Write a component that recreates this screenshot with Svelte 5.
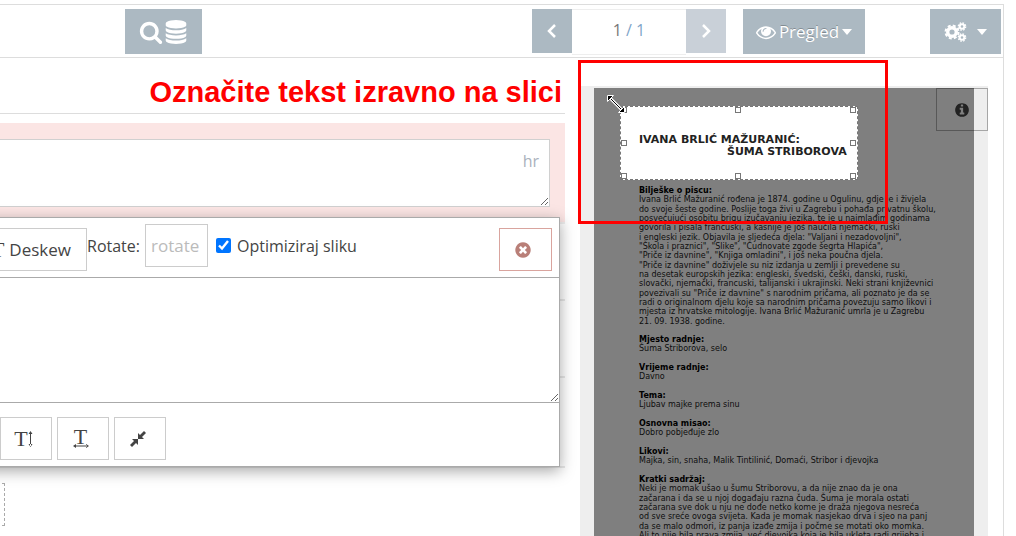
<script>
	let page = 1;
	let pages = 1;
	let note = "";
	let ocrText = "";
	let rotation = "";
	let optimize = true;

	let handles = ["nw", "n", "ne", "w", "e", "sw", "s", "se"];

	let sections = [
		{
			title: "Bilješke o piscu:",
			lines: [
				"Ivana Brlić Mažuranić rođena je 1874. godine u Ogulinu, gdje je i živjela",
				"do svoje šeste godine. Poslije toga živi u Zagrebu i pohađa privatnu školu,",
				"posvećujući osobitu brigu izučavanju jezika, te je u najmlađim godinama",
				"govorila i pisala francuski, a kasnije je još naučila njemački, ruski",
				"i engleski jezik. Objavila je sljedeća djela: \"Valjani i nezadovoljni\",",
				"\"Škola i praznici\", \"Slike\", \"Čudnovate zgode šegrta Hlapića\",",
				"\"Priče iz davnine\", \"Knjiga omladini\", i još neka poučna djela.",
				"\"Priče iz davnine\" doživjele su niz izdanja u zemlji i prevedene su",
				"na desetak europskih jezika: engleski, švedski, češki, danski, ruski,",
				"slovački, njemački, francuski, talijanski i ukrajinski. Neki strani književnici",
				"povezivali su \"Priče iz davnine\" s narodnim pričama, ali poznato je da se",
				"radi o originalnom djelu koje sa narodnim pričama povezuju samo likovi i",
				"mjesta iz hrvatske mitologije. Ivana Brlić Mažuranić umrla je u Zagrebu",
				"21. 09. 1938. godine.",
			],
		},
		{ title: "Mjesto radnje:", lines: ["Šuma Striborova, selo"] },
		{ title: "Vrijeme radnje:", lines: ["Davno"] },
		{ title: "Tema:", lines: ["Ljubav majke prema sinu"] },
		{ title: "Osnovna misao:", lines: ["Dobro pobjeđuje zlo"] },
		{
			title: "Likovi:",
			lines: ["Majka, sin, snaha, Malik Tintilinić, Domaći, Stribor i djevojka"],
		},
		{
			title: "Kratki sadržaj:",
			lines: [
				"Neki je momak ušao u šumu Striborovu, a da nije znao da je ona",
				"začarana i da se u njoj događaju razna čuda. Šuma je morala ostati",
				"začarana sve dok u nju ne dođe netko kome je draža njegova nesreća",
				"od sve sreće ovoga svijeta. Kada je momak nasjekao drva i sjeo na panj",
				"da se malo odmori, iz panja izađe zmija i počme se motati oko momka.",
				"Ali to nije bila prava zmija, već djevojka koja je bila ukleta radi grijeha i",
			],
		},
	];
</script>

<svelte:head>
	<title>Pregled</title>
</svelte:head>

<div class="frame">
	<header class="toolbar">
		<button class="tool search" aria-label="Traži">
			<svg width="24" height="24" viewBox="0 0 1792 1792">
				<path d="M1216 832q0-185-131.500-316.500t-316.500-131.500-316.500 131.500-131.500 316.500 131.500 316.500 316.500 131.500 316.500-131.500 131.500-316.500zm512 832q0 52-38 90t-90 38q-54 0-90-38l-343-342q-179 124-399 124-143 0-273.500-55.500t-225-150-150-225-55.500-273.500 55.500-273.500 150-225 225-150 273.500-55.500 273.500 55.500 225 150 150 225 55.500 273.500q0 220-124 399l343 343q37 37 37 90z" />
			</svg>
			<svg width="24" height="24" viewBox="0 0 1792 1792">
				<path d="M896 768q237 0 443-43t325-127v170q0 69-103 128t-280 93.500-385 34.500-385-34.500-280-93.500-103-128v-170q119 84 325 127t443 43zm0 768q237 0 443-43t325-127v170q0 69-103 128t-280 93.500-385 34.500-385-34.500-280-93.500-103-128v-170q119 84 325 127t443 43zm0-384q237 0 443-43t325-127v170q0 69-103 128t-280 93.500-385 34.500-385-34.500-280-93.500-103-128v-170q119 84 325 127t443 43zm0-1152q208 0 385 34.500t280 93.500 103 128v128q0 69-103 128t-280 93.500-385 34.500-385-34.500-280-93.500-103-128v-128q0-69 103-128t280-93.500 385-34.500z" />
			</svg>
		</button>

		<nav class="pager">
			<button class="tool step" aria-label="Prethodna">
				<svg width="12" height="16" viewBox="0 0 12 16">
					<path class="chevron" d="M9 2 L3 8 L9 14" />
				</svg>
			</button>
			<span class="count">{page} <i>/</i> <b>{pages}</b></span>
			<button class="tool step" aria-label="Sljedeća" disabled={page >= pages}>
				<svg width="12" height="16" viewBox="0 0 12 16">
					<path class="chevron" d="M3 2 L9 8 L3 14" />
				</svg>
			</button>
		</nav>

		<button class="tool view">
			<svg width="20" height="20" viewBox="0 0 1792 1792">
				<path d="M1664 960q-152-236-381-353 61 104 61 225 0 185-131.500 316.500t-316.500 131.500-316.500-131.500-131.500-316.500q0-121 61-225-229 117-381 353 133 205 333.500 326.500t434.500 121.500 434.500-121.500 333.500-326.500zm-720-384q0-20-14-34t-34-14q-125 0-214.500 89.500t-89.500 214.500q0 20 14 34t34 14 34-14 14-34q0-86 61-147t147-61q20 0 34-14t14-34zm848 384q0 34-20 69-140 230-376.500 368.500t-499.500 138.500-499.500-139-376.500-368q-20-35-20-69t20-69q140-229 376.500-368t499.500-139 499.500 139 376.500 368q20 35 20 69z" />
			</svg>
			<span>Pregled</span>
			<svg width="10" height="6" viewBox="0 0 10 6"><path d="M0 0h10l-5 6z" /></svg>
		</button>

		<button class="tool settings" aria-label="Postavke">
			<svg class="cogs" width="23" height="22" viewBox="0 0 23 22">
				<circle cx="8" cy="11" r="4.300" stroke-width="3.400" />
				<circle cx="8" cy="11" r="6.500" stroke-width="2" stroke-dasharray="2.950 2.155" />
				<circle cx="18" cy="5.500" r="2.300" stroke-width="2" />
				<circle cx="18" cy="5.500" r="3.700" stroke-width="1.300" stroke-dasharray="1.600 1.306" />
				<circle cx="18" cy="16.500" r="2.300" stroke-width="2" />
				<circle cx="18" cy="16.500" r="3.700" stroke-width="1.300" stroke-dasharray="1.600 1.306" />
			</svg>
			<svg width="10" height="6" viewBox="0 0 10 6"><path d="M0 0h10l-5 6z" /></svg>
		</button>
	</header>

	<main>
		<div class="editor">
			<h1>Označite tekst izravno na slici</h1>

			<div class="field">
				<textarea aria-label="Naslov" bind:value={note}></textarea>
				<span class="lang">hr</span>
			</div>
			<div class="row"></div>
			<div class="row"></div>
			<div class="row last"></div>
			<div class="drop"></div>

			<section class="popup">
				<div class="options">
					<button class="box deskew"><span class="letter">T</span>Deskew</button>
					<div class="group">
						<label for="rotate">Rotate:</label>
						<input id="rotate" type="text" placeholder="rotate" bind:value={rotation} />
						<label class="check">
							<input type="checkbox" bind:checked={optimize} />
							Optimiziraj sliku
						</label>
					</div>
					<button class="box close" aria-label="Zatvori">
						<svg width="18" height="18" viewBox="0 0 1792 1792">
							<path d="M1277 1122q0-26-19-45l-181-181 181-181q19-19 19-45 0-27-19-46l-90-90q-19-19-46-19-26 0-45 19l-181 181-181-181q-19-19-45-19-27 0-46 19l-90 90q-19 19-19 46 0 26 19 45l181 181-181 181q-19 19-19 45 0 27 19 46l90 90q19 19 46 19 26 0 45-19l181-181 181 181q19 19 45 19 27 0 46-19l90-90q19-19 19-46zm387-226q0 209-103 385.500t-279.500 279.500-385.500 103-385.500-103-279.500-279.500-103-385.500 103-385.500 279.500-279.500 385.500-103 385.500 103 279.500 279.500 103 385.500z" />
						</svg>
					</button>
				</div>

				<textarea class="result" aria-label="Tekst" bind:value={ocrText}></textarea>

				<div class="actions">
					<button class="box" aria-label="Visina teksta">
						<span class="letter">T</span>
						<svg width="5" height="16" viewBox="0 0 5 16">
							<path d="M2 1h1v14h-1zM2.500 0l2 3h-4zM2.500 16l2-3h-4z" />
						</svg>
					</button>
					<button class="box stacked" aria-label="Širina teksta">
						<span class="letter">T</span>
						<svg width="16" height="4" viewBox="0 0 16 4">
							<path d="M2 1.500h12v1h-12zM0 2l3-2v4zM16 2l-3-2v4z" />
						</svg>
					</button>
					<button class="box" aria-label="Smanji">
						<svg width="16" height="16" viewBox="0 0 16 16">
							<path d="M8 8V2l2 2 4-4 2 2-4 4 2 2zM8 8v6l-2-2-4 4-2-2 4-4-2-2z" />
						</svg>
					</button>
				</div>
			</section>
		</div>

		<div class="viewer">
			<article class="scan">
				<h2>IVANA BRLIĆ MAŽURANIĆ:</h2>
				<h2 class="work">ŠUMA STRIBOROVA</h2>

				{#each sections as section (section.title)}
					<section>
						<h3>{section.title}</h3>
						{#each section.lines as line}
							<p>{line}</p>
						{/each}
					</section>
				{/each}

				<div class="selection">
					{#each handles as handle (handle)}
						<span class="handle {handle}"></span>
					{/each}
				</div>
			</article>

			<button class="info" aria-label="Informacije">
				<svg width="16" height="16" viewBox="0 0 1792 1792">
					<path d="M1152 1376v-160q0-14-9-23t-23-9h-96v-512q0-14-9-23t-23-9h-320q-14 0-23 9t-9 23v160q0 14 9 23t23 9h96v320h-96q-14 0-23 9t-9 23v160q0 14 9 23t23 9h448q14 0 23-9t9-23zm-128-896v-160q0-14-9-23t-23-9h-192q-14 0-23 9t-9 23v160q0 14 9 23t23 9h192q14 0 23-9t9-23zm640 416q0 209-103 385.500t-279.500 279.500-385.500 103-385.500-103-279.500-279.500-103-385.500 103-385.500 279.500-279.500 385.500-103 385.500 103 279.500 279.500 103 385.500z" />
				</svg>
			</button>

			<div class="marker"></div>

			<svg class="cursor" width="20" height="20" viewBox="0 0 20 20">
				<path class="halo" d="M4 4L16 16" />
				<path class="shaft" d="M4 4L16 16" />
				<path class="tip" d="M1.500 1.500h6l-6 6zM18.500 18.500h-6l6-6z" />
			</svg>
		</div>
	</main>
</div>

<style>
	:global(body) {
		overflow: hidden;
		background: #fff;
		color: #444;
		font-family: "Open Sans", "Noto Sans", sans-serif;
		font-size: 16px;
	}

	* {
		box-sizing: border-box;
	}

	button,
	input,
	textarea {
		font: inherit;
		color: inherit;
		border-radius: 0;
	}

	button {
		display: flex;
		align-items: center;
		justify-content: center;
		padding: 0;
		cursor: pointer;
	}

	svg {
		flex: none;
		fill: currentColor;
	}

	.frame {
		display: flex;
		flex-direction: column;
		height: calc(100vh - 4px);
		margin: 4px 12px 0 0;
		border: solid #ddd;
		border-width: 1px 1px 0 0;
	}

	/* toolbar */
	.toolbar {
		display: flex;
		align-items: flex-start;
		height: 53px;
		padding: 4px 2px 0 125px;
		border-bottom: 1px solid #ddd;
	}

	.tool {
		height: 45px;
		border: 0;
		background: #acb9c2;
		color: #fff;
		font-size: 17px;
		text-shadow: 0 -1px 0 rgba(0, 0, 0, 0.25);
	}

	.tool:disabled {
		background: #c9d0d8;
	}

	.search {
		width: 77px;
		gap: 1px;
	}

	.pager {
		display: flex;
		margin-left: auto;
	}

	.step {
		width: 40px;
		height: 44px;
	}

	.chevron {
		fill: none;
		stroke: #fff;
		stroke-width: 2.500;
	}

	.count {
		width: 114px;
		height: 46px;
		border: solid #eee;
		border-width: 1px 0;
		line-height: 40px;
		text-align: center;
		color: #777;
	}

	.count i,
	.count b {
		font-style: normal;
		font-weight: normal;
		color: #7fa5c9;
	}

	.view {
		width: 122px;
		gap: 3px;
		margin-left: 17px;
	}

	.settings {
		width: 71px;
		gap: 10px;
		margin-left: 65px;
	}

	.cogs {
		fill: none;
		stroke: currentColor;
	}

	/* left side */
	main {
		display: flex;
		flex: 1;
		gap: 15px;
		min-height: 0;
		padding-right: 15px;
	}

	.editor {
		position: relative;
		flex: 1;
	}

	h1 {
		margin: 0 0 9px;
		padding: 13px 3px 0 0;
		height: 56px;
		border-bottom: 1px solid #ddd;
		color: #f00;
		font: bold 29px/42px "Liberation Sans", Arial, sans-serif;
		text-align: right;
	}

	.field {
		position: relative;
		height: 101px;
		padding: 16px 15px 0 0;
		border-bottom: 2px solid #eee;
		background: #fbe5e4;
	}

	textarea {
		display: block;
		width: 100%;
		background: #fff;
		outline: none;
	}

	.field textarea {
		height: 68px;
		border: solid #d0d0d0;
		border-width: 1px 1px 1px 0;
	}

	.lang {
		position: absolute;
		top: 27px;
		right: 26px;
		color: #aab2bd;
	}

	.row {
		height: 77px;
		border-bottom: 2px solid #e8e8e8;
	}

	.row.last {
		height: 90px;
	}

	.drop {
		width: 60px;
		height: 43px;
		margin: 15px 0 0 -55px;
		border: 1px dashed #aaa;
	}

	.popup {
		position: absolute;
		top: 159px;
		left: -26px;
		right: 5px;
		border: 1px solid #aaa;
		background: #fff;
		box-shadow: 0 4px 14px rgba(0, 0, 0, 0.35);
	}

	.options {
		display: flex;
		align-items: flex-end;
		height: 59px;
		padding: 6px 7px 6px 0;
	}

	.box {
		width: 52px;
		height: 43px;
		padding-right: 5px;
		border: 1px solid #ccc;
		background: #fff;
	}

	.letter {
		font-family: "Liberation Serif", serif;
		font-size: 22px;
		line-height: 22px;
	}

	.deskew {
		justify-content: flex-end;
		gap: 5px;
		width: 112px;
		padding-right: 15px;
		font-size: 17px;
	}

	.group {
		display: flex;
		flex: 1;
		align-items: center;
		align-self: flex-start;
		height: 43px;
	}

	.group input[type="text"] {
		width: 63px;
		height: 43px;
		margin: 0 8px 0 5px;
		padding: 0 5px;
		border: 1px solid #ccc;
		background: #fff;
		font-size: 17px;
	}

	input::placeholder {
		color: #bbb;
		opacity: 1;
	}

	.check {
		display: flex;
		align-items: center;
		gap: 6px;
	}

	.check input {
		width: 15px;
		height: 15px;
		margin: 0;
		accent-color: #0075ff;
	}

	.options .close {
		width: 53px;
		border-color: #d9a49e;
		color: #b97f78;
	}

	.result {
		height: 126px;
		border: solid #aaa;
		border-width: 1px 0;
	}

	.actions {
		display: flex;
		gap: 5px;
		padding: 14px 0 6px 25px;
	}

	.stacked {
		flex-direction: column;
	}

	.stacked .letter {
		line-height: 14px;
	}

	/* scanned page */
	.viewer {
		position: relative;
		width: 408px;
		margin-top: 28px;
		padding: 2px 14px 0;
		background: #eee;
	}

	.scan {
		position: relative;
		height: 100%;
		padding: 46px 45px 0;
		overflow: hidden;
		background: #fff;
		color: #222;
		font-family: "DejaVu Sans", Verdana, sans-serif;
		font-size: 8px;
		line-height: 9px;
		white-space: nowrap;
	}

	h2,
	h3,
	p {
		margin: 0;
	}

	h2 {
		color: #222;
		font-size: 11px;
		line-height: 12px;
	}

	.work {
		margin-bottom: 28px;
		padding-left: 88px;
	}

	h3 {
		color: #000;
		font-size: 8px;
	}

	.scan section {
		margin-bottom: 9px;
	}

	/* 28px for every three lines of print */
	p:nth-child(3n + 2) {
		line-height: 10px;
	}

	.selection {
		position: absolute;
		top: 18px;
		left: 26px;
		width: 238px;
		height: 74px;
		border: 1px dashed #777;
		box-shadow: 0 0 0 999px rgba(0, 0, 0, 0.5);
	}

	.handle {
		position: absolute;
		top: 33px;
		left: 114px;
		width: 6px;
		height: 6px;
		border: 1px solid #777;
		background: #fff;
	}

	.nw,
	.n,
	.ne {
		top: 0;
	}

	.sw,
	.s,
	.se {
		top: auto;
		bottom: 0;
	}

	.nw,
	.w,
	.sw {
		left: 0;
	}

	.ne,
	.e,
	.se {
		left: auto;
		right: 1px;
	}

	.info {
		position: absolute;
		top: 2px;
		right: 0;
		width: 52px;
		height: 43px;
		border: 1px solid rgba(0, 0, 0, 0.3);
		background: none;
		color: #222;
	}

	.marker {
		position: absolute;
		top: -26px;
		left: -2px;
		width: 310px;
		height: 164px;
		border: 3px solid #f00;
		pointer-events: none;
	}

	.cursor {
		position: absolute;
		top: 8px;
		left: 26px;
	}

	.halo {
		stroke: #fff;
		stroke-width: 3;
	}

	.shaft {
		stroke: #000;
		stroke-width: 1;
	}

	.tip {
		stroke: #fff;
		stroke-width: 1;
		fill: #000;
	}
</style>
